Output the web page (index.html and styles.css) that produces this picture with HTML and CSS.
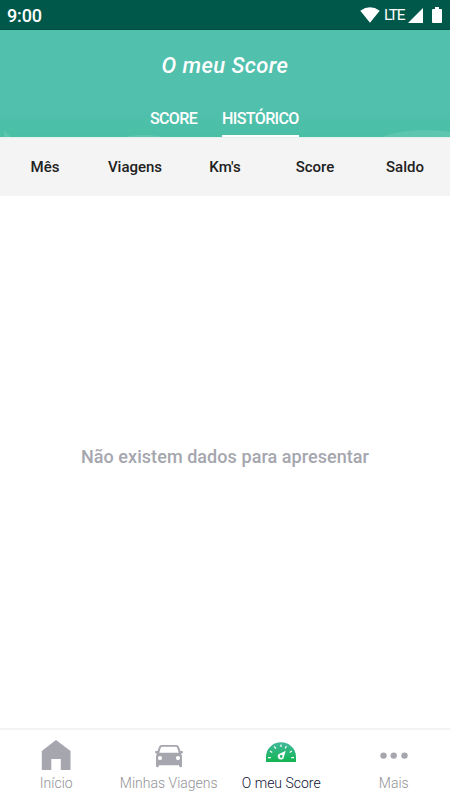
FILE: index.html
```html
<!DOCTYPE html>
<html lang="pt">
<head>
<meta charset="utf-8">
<title>O meu Score</title>
<link rel="stylesheet" href="styles.css">
</head>
<body>
<div class="app">
  <div class="status">
    <span class="clock">9:00</span>
    <svg class="wifi" width="20" height="16" viewBox="0 0 20 16"><path d="M.3 3.7Q10-3.2 19.7 3.7L10 15.8Z" fill="#fff"/></svg>
    <span class="lte">LTE</span>
    <svg class="signal" width="15" height="15" viewBox="0 0 15 15"><path d="M15 0V15H0Z" fill="#fff"/></svg>
    <svg class="battery" width="10" height="16" viewBox="0 0 10 16"><path d="M3 0H7V2H9Q10 2 10 3V15Q10 16 9 16H1Q0 16 0 15V3Q0 2 1 2H3Z" fill="#fff"/></svg>
  </div>
  <header class="header">
    <svg class="decor" width="450" height="12" viewBox="0 0 450 12"><g fill="#fff" fill-opacity=".11"><path d="M4 5L11 12H4Z"/><ellipse cx="144" cy="18" rx="27" ry="8"/><ellipse cx="426" cy="28" rx="62" ry="23"/></g></svg>
    <h1 class="title">O meu Score</h1>
    <nav class="tabs">
      <span class="tab tab-score">SCORE</span>
      <span class="tab tab-active">HISTÓRICO</span>
    </nav>
  </header>
  <div class="columns">
    <span>Mês</span><span>Viagens</span><span>Km's</span><span>Score</span><span>Saldo</span>
  </div>
  <main class="content"><p class="empty">Não existem dados para apresentar</p></main>
  <nav class="bottom">
    <div class="item">
      <svg width="30" height="32" viewBox="0 0 30 32"><path d="M15 1L29.5 12V31H19.8V20H10.3V31H.8V12Z" fill="#a5a6ae"/></svg>
      <span class="label">Início</span>
    </div>
    <div class="item">
      <svg width="30" height="32" viewBox="0 0 30 32"><path fill="#a5a6ae" fill-rule="evenodd" d="M7.8 6H22.2Q24.4 6 25 8L26.5 12H28Q29 12 29 13Q29 14.5 27 14.7Q28 16 28 18V27Q28 28.3 26.6 28.3Q25.2 28.3 25.2 27V26.3H4.8V27Q4.8 28.3 3.4 28.3Q2 28.3 2 27V18Q2 16 3 14.7Q1 14.5 1 13Q1 12 2 12H3.5L5 8Q5.6 6 7.8 6ZM8.3 7.8Q7.1 7.8 6.7 9L5.2 13.7H24.8L23.3 9Q22.9 7.8 21.7 7.8ZM6 17A2.1 2.1 0 1 0 6 21.2A2.1 2.1 0 1 0 6 17ZM24 17A2.1 2.1 0 1 0 24 21.2A2.1 2.1 0 1 0 24 17Z"/></svg>
      <span class="label label-trips">Minhas Viagens</span>
    </div>
    <div class="item">
      <svg width="30" height="32" viewBox="0 0 30 32">
        <defs><linearGradient id="gauge" x1="0" y1="0" x2="0" y2="1"><stop offset="0" stop-color="#42b89b"/><stop offset="1" stop-color="#12b553"/></linearGradient></defs>
        <path d="M0 23V18Q0 11.5 4.5 7.4Q9 3.2 15 3.2Q21 3.2 25.5 7.4Q30 11.5 30 18V23Z" fill="url(#gauge)"/>
        <path d="M2 18.7H4.8M4 12.1L6.2 13.4M8.3 7.4L9.7 9.6M15 5.5V8M20.4 6.9L19.2 9.4M25.9 12.1L23.7 13.4M25.2 18.7H28" stroke="#fff" stroke-width="1.2" fill="none"/>
        <path fill="#fff" fill-rule="evenodd" d="M19.8 11.7L18 17.5A3.1 3.1 0 1 1 14.1 14.4ZM15.2 16A1.4 1.4 0 1 0 15.2 18.8A1.4 1.4 0 1 0 15.2 16Z"/>
      </svg>
      <span class="label label-active">O meu Score</span>
    </div>
    <div class="item">
      <svg width="30" height="32" viewBox="0 0 30 32"><g fill="#a5a6ae"><circle cx="4.5" cy="16.6" r="3.2"/><circle cx="14.7" cy="16.6" r="3.2"/><circle cx="25.5" cy="16.6" r="3.2"/></g></svg>
      <span class="label">Mais</span>
    </div>
  </nav>
</div>
</body>
</html>
```
FILE: styles.css
```css
* { box-sizing: border-box; }
body { margin: 0; font-family: Roboto, sans-serif; background: #fff; }
.app { width: 450px; height: 800px; display: flex; flex-direction: column; overflow: hidden; }
.status { height: 30px; display: flex; align-items: flex-start; padding: 7px 8px 0 7px; background: #00584b; border-bottom: 1px solid #084c3f; color: #fff; }
.clock { flex: 1; font-size: 18px; line-height: 18px; font-weight: 500; letter-spacing: -0.15px; }
.lte { margin-left: 4px; width: 24px; font-size: 15.5px; line-height: 17px; letter-spacing: -1.4px; }
.signal { margin: 1px 9px 0 0; }
.header { position: relative; height: 107px; display: flex; flex-direction: column; align-items: center; background: linear-gradient(#51c0ad 0, #51c0ad 75%, #49bfa5 100%); color: #fff; }
.decor { position: absolute; left: 0; bottom: 0; }
.title { margin: 22px 0 0; font-size: 22px; line-height: 28px; font-weight: 500; font-style: italic; letter-spacing: 0.4px; white-space: nowrap; }
.tabs { position: relative; width: 450px; height: 57px; padding: 25px 0 0 150px; display: flex; gap: 25px; }
.tab { height: 32px; font-size: 16px; line-height: 28px; font-weight: 500; white-space: nowrap; }
.tab-score { width: 47px; letter-spacing: -0.65px; }
.tab-active { width: 77px; border-bottom: 2px solid #fff; letter-spacing: -0.6px; }
.columns { height: 59px; display: grid; grid-template-columns: repeat(5, 1fr); align-items: center; text-align: center; background: #f4f4f4; border-top: 1px solid #e5f1ed; color: #212121; font-size: 15px; font-weight: 500; }
.content { flex: 1; display: flex; align-items: center; justify-content: center; padding-bottom: 11px; }
.empty { margin: 0; color: #a5a6ae; font-size: 18px; line-height: 24px; font-weight: 500; letter-spacing: 0.06px; white-space: nowrap; }
.bottom { height: 72px; padding-top: 9px; display: grid; grid-template-columns: repeat(4, 1fr); border-top: 2px solid #f3f3f3; }
.item { display: flex; flex-direction: column; align-items: center; }
.label { margin-top: 2px; color: #929297; font-size: 14px; line-height: 20px; font-weight: 300; white-space: nowrap; }
.label-active { color: #101338; }
```
